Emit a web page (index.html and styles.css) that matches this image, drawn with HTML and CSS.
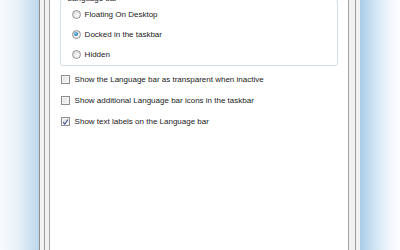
FILE: index.html
```html
<!DOCTYPE html>
<html lang="en">
<head>
  <meta charset="UTF-8">
  <title>Language Bar</title>
  <link rel="stylesheet" href="styles.css">
</head>
<body>
  <div class="glass glass-left"></div>

  <div class="frame">
    <div class="panel">
      <div class="page">

        <fieldset class="group">
          <legend>Language bar</legend>
          <div class="row">
            <span class="radio"></span>
            <span class="label">Floating On Desktop</span>
          </div>
          <div class="row">
            <span class="radio checked"></span>
            <span class="label">Docked in the taskbar</span>
          </div>
          <div class="row">
            <span class="radio"></span>
            <span class="label">Hidden</span>
          </div>
        </fieldset>

        <div class="options">
          <div class="row tall">
            <span class="check"></span>
            <span class="label">Show the Language bar as transparent when inactive</span>
          </div>
          <div class="row tall">
            <span class="check"></span>
            <span class="label">Show additional Language bar icons in the taskbar</span>
          </div>
          <div class="row tall">
            <span class="check">
              <svg width="8" height="8" viewBox="0 0 8 8">
                <path d="M1.2 4.2 L3.2 6.4 L6.8 1.2" fill="none" stroke="#3b5494" stroke-width="1.3"/>
              </svg>
            </span>
            <span class="label">Show text labels on the Language bar</span>
          </div>
        </div>

      </div>
    </div>
  </div>

  <div class="glass glass-right"></div>
</body>
</html>
```

FILE: styles.css
```css
body {
  margin: 0;
  height: 250px;
  overflow: hidden;
  display: flex;
  font-family: "Liberation Sans", Arial, sans-serif;
  font-size: 8px;
  color: #222;
  background: #fff;
}

.glass {
  height: 100%;
}

.glass-left {
  width: 39px;
  background: linear-gradient(to right, #f8fbfd 0%, #e8f1f8 45%, #bcd7ec 100%);
}

.glass-right {
  width: 40px;
  background: linear-gradient(to right, #a9cde8 0%, #cfe4f3 35%, #eef5fb 70%, #fdfeff 100%);
}

/* window chrome: three thin lines on the left, two on the right */
.frame {
  width: 316px;
  border-left: 1px solid #8d8d8d;
  background: #f1f1f1;
  padding: 0 4px;
  display: flex;
}

.panel {
  flex: 1;
  border-left: 1px solid #9c9c9c;
  border-right: 1px solid #9c9c9c;
  padding: 0 6px 0 4px;
  display: flex;
}

.page {
  flex: 1;
  background: #fff;
  border-left: 1px solid #a3a3a3;
  border-right: 1px solid #a3a3a3;
  padding: 0 10px;
  overflow: hidden;
}

.group {
  margin: -6px 0 0;
  border: 1px solid #d5dfe5;
  border-radius: 3px;
  padding: 0 0 1px 11px;
}

.group legend {
  line-height: 10px;
  padding: 0 2px;
  margin-left: -6px;
}

.row {
  height: 20px;
  display: flex;
  align-items: center;
  gap: 4px;
}

.row.tall {
  height: 21px;
}

.options {
  margin-top: 3px;
  padding-left: 1px;
}

.radio {
  width: 7px;
  height: 7px;
  border: 1px solid #959595;
  border-radius: 50%;
  background: radial-gradient(circle at 60% 65%, #fdfdfd 0%, #e4e4e4 55%, #cfcfcf 100%);
  display: flex;
  align-items: center;
  justify-content: center;
}

.radio.checked::after {
  content: "";
  width: 4px;
  height: 4px;
  border-radius: 50%;
  background: radial-gradient(circle at 40% 35%, #8fd0f2 0%, #2f8ac6 55%, #1c4f7a 100%);
}

.check {
  width: 7px;
  height: 7px;
  border: 1px solid #8f8f8f;
  background: linear-gradient(135deg, #dcdcdc 0%, #ececec 50%, #fbfbfb 100%);
  box-shadow: inset 0 0 0 1px #f4f4f4;
  display: flex;
  align-items: center;
  justify-content: center;
  margin-right: 1px;
}

.check svg {
  display: block;
}

.label {
  white-space: nowrap;
}
```
